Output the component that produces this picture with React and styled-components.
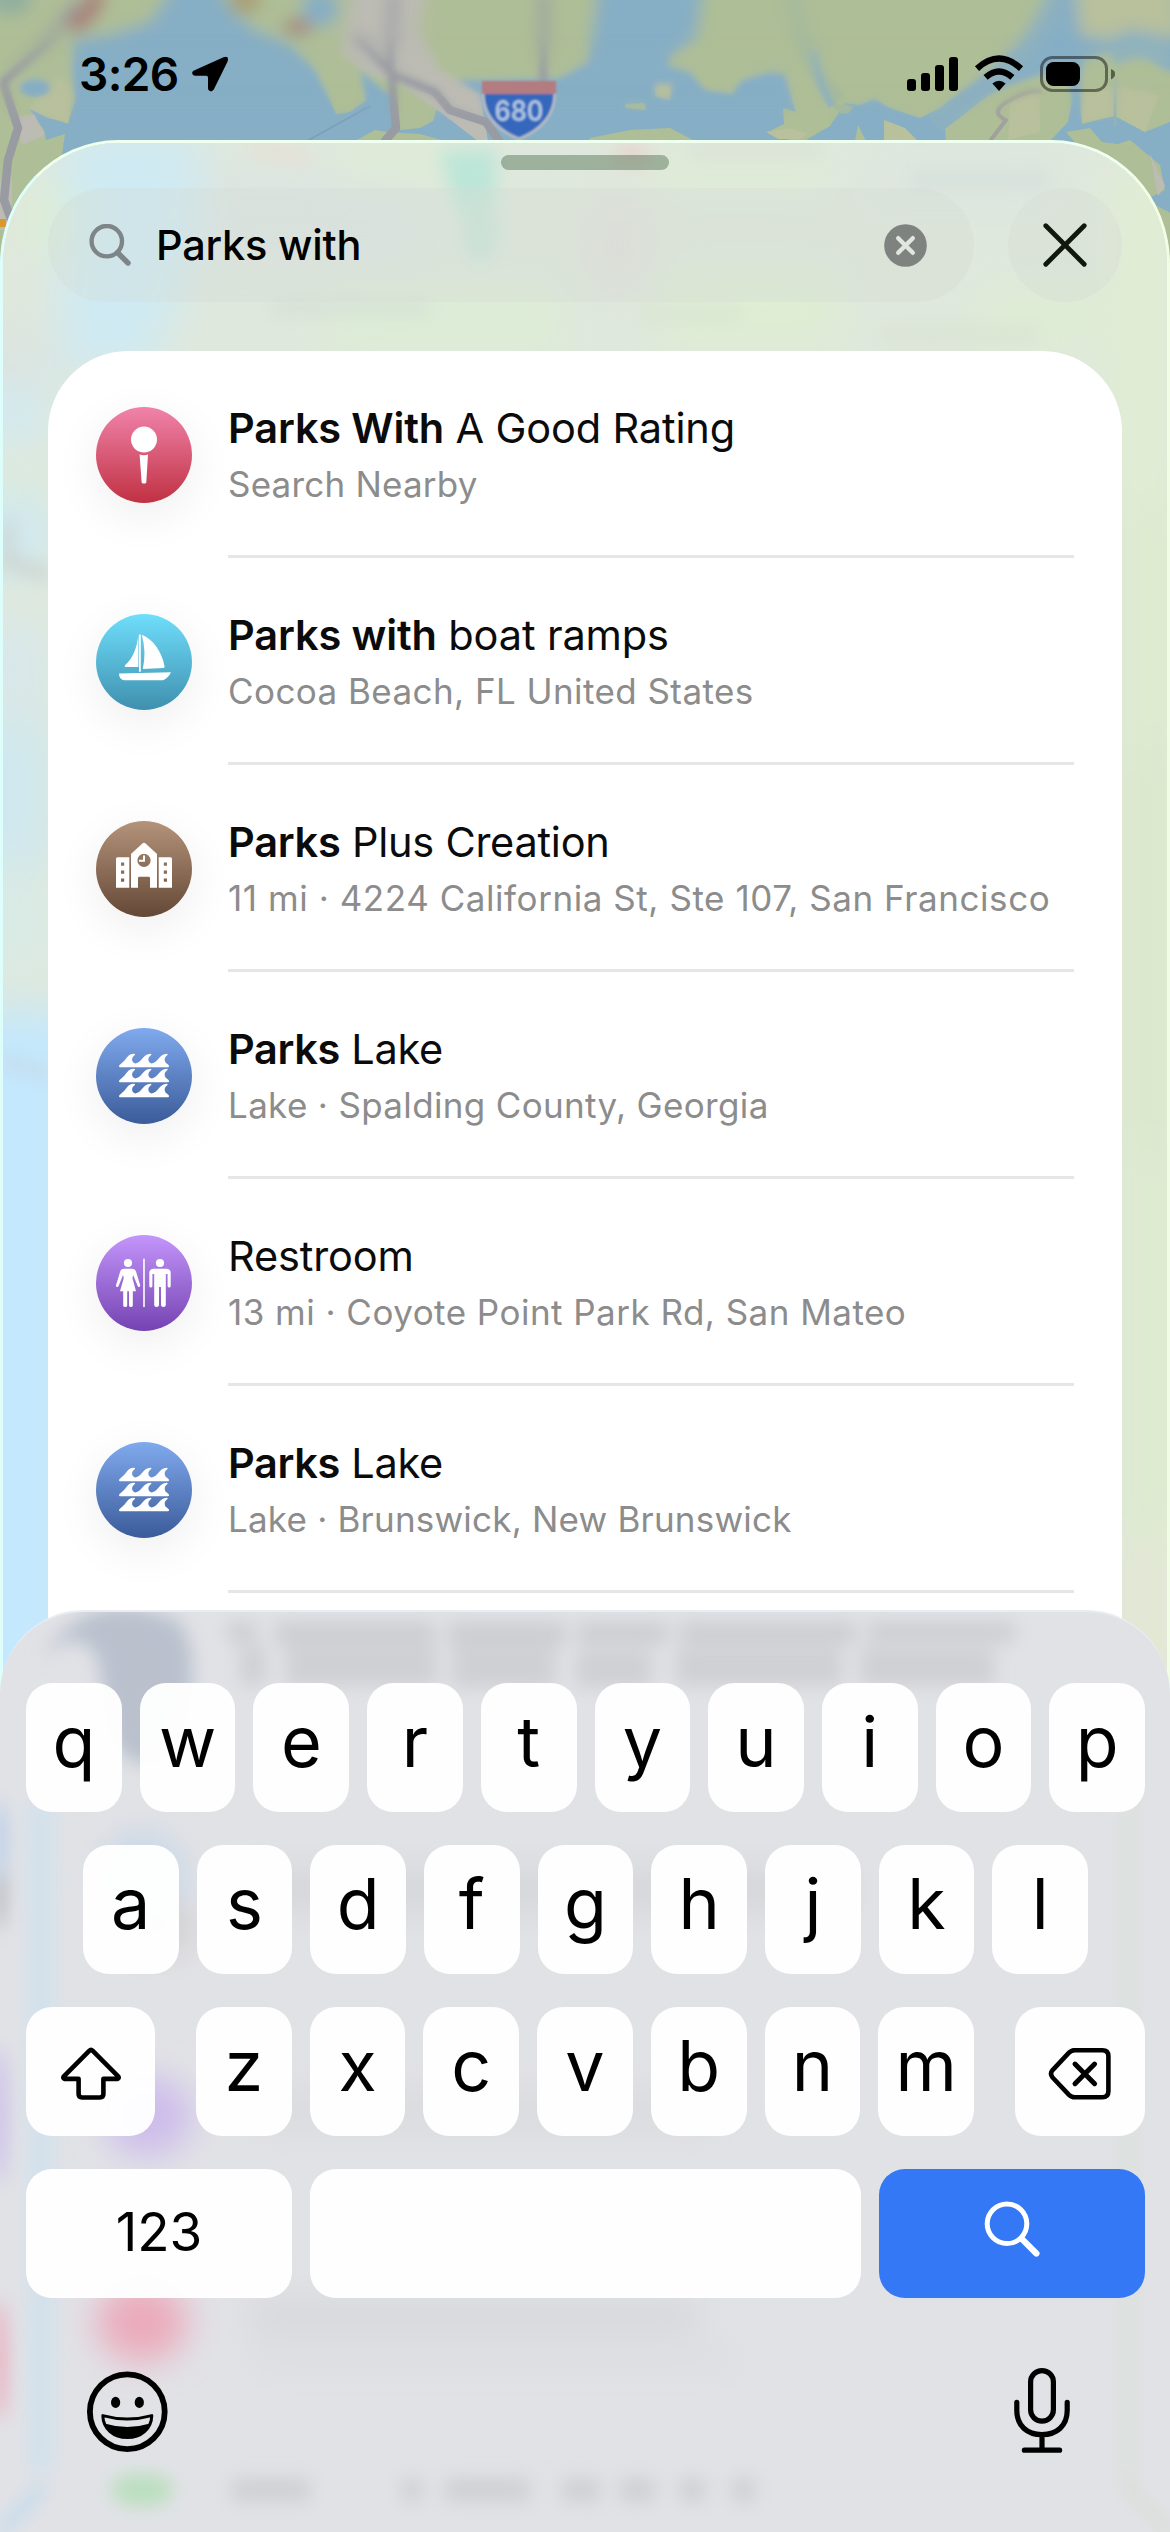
import React from 'react';
import styled, { createGlobalStyle } from 'styled-components';

const GlobalStyle = createGlobalStyle`
  * {
    box-sizing: border-box;
  }

  body {
    margin: 0;
    background: #fff;
    font-family: Inter, 'Liberation Sans', sans-serif;
  }
`;

// Layout
const Screen = styled.main`
  position: relative;
  display: flex;
  flex-direction: column;
  width: 1170px;
  height: 2532px;
  overflow: hidden;
  background: #86aec5;
`;

const Backdrop = styled.svg`
  position: absolute;
  top: 0;
  left: 0;
  width: 100%;
  height: 100%;
`;

const Icon = styled.svg`
  display: block;
  flex: none;
  width: ${({ $w }) => $w}px;
  height: ${({ $h }) => $h}px;
  fill: none;
  stroke-linecap: round;
  stroke-linejoin: round;
`;

// Status bar
const StatusBar = styled.header`
  position: relative;
  display: flex;
  justify-content: space-between;
  height: 140px;
  padding: 52px 54px 0 79px;
`;

const StatusGroup = styled.div`
  display: flex;
  height: 44px;
  align-items: center;
`;

const Time = styled.span`
  width: 112px;
  font-size: 46px;
  font-weight: 600;
  line-height: 44px;
  letter-spacing: -0.6px;
`;

// Sheet
const Sheet = styled.section`
  position: relative;
  display: flex;
  flex: 1;
  flex-direction: column;
  padding: 12px 45px 0;
  overflow: hidden;
  background: #dfe9dc;
  border: 3px solid #effff0;
  border-left-color: #defefb;
  border-right-color: #f2fde6;
  border-bottom: 0;
  border-radius: 118px 118px 0 0 / 124px 124px 0 0;
`;

const Grabber = styled.div`
  position: relative;
  flex: none;
  align-self: center;
  width: 168px;
  height: 15px;
  background: rgba(70, 100, 70, 0.42);
  border-radius: 8px;
`;

const SearchRow = styled.div`
  position: relative;
  display: flex;
  flex: none;
  gap: 34px;
  margin-top: 18px;
`;

const SearchField = styled.div`
  display: flex;
  flex: 1;
  align-items: center;
  height: 114px;
  padding: 0 47px 0 41px;
  background: rgba(212, 218, 210, 0.32);
  border-radius: 57px;
`;

const Query = styled.span`
  flex: 1;
  margin-left: 25px;
  font-size: 41.5px;
  font-weight: 500;
  letter-spacing: -0.2px;
`;

const CloseButton = styled.div`
  display: flex;
  align-items: center;
  justify-content: center;
  width: 114px;
  height: 114px;
  background: rgba(212, 218, 210, 0.32);
  border-radius: 50%;
`;

const Card = styled.div`
  position: relative;
  flex: 1;
  margin-top: 49px;
  overflow: hidden;
  background: #fff;
  border-radius: 80px 80px 0 0;
`;

// Result row
const Row = styled.div`
  display: flex;
  height: 207px;
  padding: 0 48px;
`;

const Badge = styled.div`
  flex: none;
  width: 96px;
  height: 96px;
  margin: 56px 36px 0 0;
  background: linear-gradient(${({ $from, $to }) => `${$from}, ${$to}`});
  border-radius: 50%;
  box-shadow: 0 12px 48px rgba(0, 0, 0, 0.07);
`;

const RowBody = styled.div`
  flex: 1;
  padding-top: 52px;
  border-bottom: 3px solid #e6e6e6;
  white-space: nowrap;
`;

const Title = styled.div`
  font-size: 41.5px;
  line-height: 50px;
  letter-spacing: ${({ $track }) => $track || 0}px;
  color: #0b0b0b;

  b {
    font-weight: 600;
  }
`;

const Subtitle = styled.div`
  margin-top: 9px;
  font-size: 35px;
  line-height: 44px;
  letter-spacing: ${({ $track }) => $track || 0}px;
  color: #8c8c8c;
`;

// Keyboard
const Keyboard = styled.section`
  position: absolute;
  bottom: 0;
  left: 0;
  display: flex;
  flex-direction: column;
  gap: 33px;
  width: 100%;
  height: 922px;
  padding: 71px 25px 0 26px;
  overflow: hidden;
  background: #e1e2e6;
  border-top: 2px solid #e9ecf2;
  border-radius: 84px 84px 0 0;
`;

const KeyRow = styled.div`
  position: relative;
  display: flex;
  flex: none;
  justify-content: ${({ $justify }) => $justify || 'center'};
  gap: 18px;
`;

const KeyGroup = styled.div`
  display: flex;
  gap: 18px;
`;

const Key = styled.div`
  display: flex;
  align-items: center;
  justify-content: center;
  width: ${({ $width }) => $width || 95.7}px;
  height: 129px;
  padding-bottom: ${({ $lift }) => $lift || 0}px;
  background: ${({ $primary }) => ($primary ? '#3578f6' : 'rgba(255, 255, 255, 0.96)')};
  border-radius: 26px;
  font-size: ${({ $small }) => ($small ? 53 : 70)}px;
  line-height: 1;
  color: #000;
`;

const BottomBar = styled.div`
  position: relative;
  display: flex;
  justify-content: space-between;
  padding: 35px 73px 0 59px;
`;

function MapShapes() {
  return (
    <g>
      <rect width="1170" height="900" fill="#86aec5" />
      <g fill="#aebe96">
        <path d="M-20 -20H180L150 22L110 35L74 40L72 70L75 100L68 124L50 118L38 105L30 110L44 130L46 140L65 134L62 155L40 190L0 300H-20Z" />
        <path d="M215 -20L230 10L255 30L290 45L315 70L330 100L336 114L350 112L366 100L360 70L395 100L400 130L420 128L433 121L438 105L420 80H480L560 78L588 62L600 -20Z" />
        <path d="M388 132L420 134L445 141H355L375 130Z" />
        <path d="M704 -20L696 38L670 56L668 66L690 72L705 90L732 94L742 80L770 72L785 74L792 100L796 112L783 108L784 124L768 132L790 140L806 140L830 126L845 103L860 105L874 99L890 108L920 118L960 98L1000 60L1045 20L1062 -20Z" />
        <path d="M944 122L975 102L1010 85L1040 75H1068L1072 100L1068 122L1050 141H946Z" />
        <path d="M1084 60L1110 50L1150 60L1180 78V118L1165 124L1145 132L1115 116L1082 124L1078 90Z" />
        <path d="M590 138L630 130L670 128L695 141H588Z" />
        <path d="M1066 132L1090 128L1102 142L1118 144L1130 140L1160 165L1165 190L1145 200L1175 215V420H1130L1090 160Z" />
        <path d="M625 104L645 103L646 110L625 108Z" />
        <path d="M858 125L866 141H855Z" />
        <path d="M1075 -20L1180 -20V40L1130 30L1110 40L1080 35Z" />
      </g>
      <g fill="#b8c09c">
        <path d="M28 108L60 75L72 90L68 122L48 118Z" />
        <path d="M1075 -20H1180V40L1130 30L1110 40L1080 35Z" />
        <path d="M1084 90L1120 85L1160 95L1145 132L1115 116L1082 122Z" />
        <path d="M655 84L672 84L670 100L655 96Z" />
        <path d="M884 120L905 128L918 141H884Z" />
        <path d="M766 132L790 128L808 134L800 139H778Z" />
        <path d="M1010 100L1040 92V132L1008 140Z" />
      </g>
      <g fill="#bcbbb4">
        <path d="M355 -20H430L418 30L440 70L480 94L488 141H478L440 112L400 84L365 72L340 52Z" />
        <path d="M15 118L34 114L45 135L22 145Z" />
        <path d="M0 180L12 175V230H0Z" />
        <path d="M1150 154L1165 186L1158 196Z" />
      </g>
      <ellipse cx="35" cy="88" rx="15" ry="9" fill="#86aec5" />
      <path d="M307 141L370 106" stroke="#7b9fb8" strokeWidth="1.5" />
      <path d="M790 -20Q800 50 822 80T845 105" stroke="#a5b99c" strokeWidth="16" fill="none" />
      <path d="M814 50Q818 85 832 106" stroke="#8eb1bd" strokeWidth="7" fill="none" />
      <path d="M1062 -20Q1045 40 1000 74L935 124" stroke="#8cb0c0" strokeWidth="20" fill="none" />
      <path d="M1076 80V130" stroke="#86aec5" strokeWidth="9" />
      <path d="M1115 80V126" stroke="#93b2b5" strokeWidth="3" />
      <path d="M1112 58Q1140 40 1170 56" stroke="#90b3bd" strokeWidth="18" fill="none" />
      <g fill="none" stroke="#999ba3" strokeWidth="8.5" strokeLinejoin="round">
        <path d="M78 0L48 42L3 82L18 128L8 160L4 200L12 222" />
        <path d="M394 -10L390 60L396 128L384 142" />
        <path d="M355 35L392 74L435 92L450 110L486 122L500 142" />
        <path d="M544 -10L543 84" />
        <path d="M1042 92Q1032 88 1010 100T1006 120L990 141" strokeWidth="4" stroke="#a0a09e" />
      </g>
      <path d="M98 -10Q92 18 70 26" stroke="#a8807a" strokeWidth="18" fill="none" />
      <ellipse cx="245" cy="0" rx="16" ry="14" fill="#a8a078" />
      <ellipse cx="298" cy="27" rx="15" ry="9" fill="#a58d83" />
      <ellipse cx="320" cy="8" rx="18" ry="18" fill="#86aec5" />
      <ellipse cx="10" cy="0" rx="22" ry="14" fill="#8fae9f" />
      <rect x="0" y="219" width="6" height="8" fill="#d9982a" />
    </g>
  );
}

function MapBackdrop() {
  return (
    <Backdrop viewBox="0 0 1170 2532">
      <defs>
        <filter id="mapBlur" x="-5%" y="-5%" width="110%" height="110%">
          <feGaussianBlur stdDeviation="8" />
        </filter>
        <filter id="mapMid" x="-5%" y="-5%" width="110%" height="110%">
          <feGaussianBlur stdDeviation="3" />
        </filter>
        <filter id="signBlur">
          <feGaussianBlur stdDeviation="1.3" />
        </filter>
        <linearGradient id="midFade" x1="0" y1="35" x2="0" y2="80" gradientUnits="userSpaceOnUse">
          <stop offset="0" stopColor="#000" />
          <stop offset="1" stopColor="#fff" />
        </linearGradient>
        <linearGradient id="mapFade" x1="0" y1="85" x2="0" y2="125" gradientUnits="userSpaceOnUse">
          <stop offset="0" stopColor="#000" />
          <stop offset="1" stopColor="#fff" />
        </linearGradient>
        <mask id="mapSoft" maskUnits="userSpaceOnUse" x="0" y="0" width="1170" height="900">
          <rect width="1170" height="900" fill="url(#midFade)" />
        </mask>
        <mask id="mapSharp" maskUnits="userSpaceOnUse" x="0" y="0" width="1170" height="900">
          <rect width="1170" height="900" fill="url(#mapFade)" />
        </mask>
      </defs>
      <g filter="url(#mapBlur)">
        <MapShapes />
      </g>
      <g mask="url(#mapSoft)">
        <g filter="url(#mapMid)">
          <MapShapes />
        </g>
      </g>
      <g mask="url(#mapSharp)">
        <MapShapes />
      </g>
      <g filter="url(#signBlur)">
        <path d="M484 84H554Q560 122 519 139Q478 122 484 84Z" fill="#3667bd" stroke="#b9bfc4" strokeWidth="2.5" />
        <path d="M482 81H556V94H482Z" fill="#b27c80" />
        <text x="519" y="121" textAnchor="middle" fontSize="28" fontWeight="600" textLength="49" lengthAdjust="spacingAndGlyphs" fill="#aec4e0">680</text>
      </g>
    </Backdrop>
  );
}

// Colour that shows through the frosted sheet, offset by the sheet's own origin
function SheetTint() {
  return (
    <Backdrop viewBox="3 143 1164 2389" preserveAspectRatio="none">
      <defs>
        <filter id="tintBlur" x="-20%" y="-20%" width="140%" height="140%">
          <feGaussianBlur stdDeviation="22" />
        </filter>
        <filter id="tintSoft" x="-50%" y="-50%" width="200%" height="200%">
          <feGaussianBlur stdDeviation="9" />
        </filter>
      </defs>
      <rect x="0" y="140" width="1170" height="2392" fill="#dfe8dc" />
      <g filter="url(#tintBlur)">
        <path d="M60 130H200V250L150 370H60Z" fill="#cfeaf3" />
        <rect x="30" y="190" width="40" height="60" fill="#dcefd2" />
        <rect x="200" y="170" width="220" height="100" fill="#dce5e1" />
        <rect x="340" y="140" width="120" height="40" fill="#dfedd5" />
        <rect x="650" y="160" width="180" height="30" fill="#dfedd6" />
        <rect x="330" y="290" width="230" height="60" fill="#dcedd4" />
        <rect x="590" y="200" width="60" height="90" fill="#dfe0db" />
        <rect x="660" y="270" width="180" height="80" fill="#deedd3" />
        <rect x="860" y="150" width="200" height="60" fill="#dee6df" />
        <rect x="980" y="290" width="120" height="60" fill="#deedd3" />
        <rect x="1110" y="170" width="60" height="330" fill="#e1edd3" />
        <rect x="1120" y="500" width="60" height="250" fill="#deebcd" />
        <rect x="1120" y="750" width="60" height="400" fill="#dce8cb" />
        <rect x="1120" y="1150" width="60" height="380" fill="#ddebce" />
        <rect x="1120" y="1530" width="60" height="300" fill="#e2e8d3" />
        <rect x="-60" y="330" width="110" height="60" fill="#dbe4e0" />
        <rect x="-60" y="390" width="110" height="50" fill="#d2eaf1" />
        <rect x="-60" y="460" width="110" height="40" fill="#dceade" />
        <rect x="-60" y="500" width="110" height="70" fill="#cfe9f2" />
        <rect x="-60" y="620" width="110" height="90" fill="#d8e8ea" />
        <rect x="-60" y="720" width="110" height="150" fill="#cfe8ef" />
        <rect x="-60" y="880" width="110" height="90" fill="#d9ebe6" />
        <rect x="-60" y="1010" width="140" height="1540" fill="#c4e8fd" />
      </g>
      <g filter="url(#tintSoft)">
        <path d="M440 150H496V205L470 240L450 190Z" fill="#bce6d8" />
        <ellipse cx="480" cy="230" rx="20" ry="35" fill="#c9e5d8" />
        <ellipse cx="632" cy="155" rx="18" ry="8" fill="#e7cfc9" />
        <path d="M250 148L310 158" stroke="#ecd9d0" strokeWidth="8" />
        <path d="M690 150H820" stroke="#d5dcd0" strokeWidth="8" />
        <path d="M270 308H430" stroke="#d5e1d7" strokeWidth="14" />
        <path d="M910 180H1050" stroke="#d6e1db" strokeWidth="18" />
        <path d="M880 334H1040" stroke="#d8e2d0" strokeWidth="12" />
        <path d="M640 315H740" stroke="#d9e5d3" strokeWidth="14" />
        <path d="M0 560L50 575" stroke="#c9d2ce" strokeWidth="12" />
        <path d="M0 1060L50 1075" stroke="#c3d8e6" strokeWidth="10" />
        <path d="M8 520V560" stroke="#cbd1ca" strokeWidth="10" />
      </g>
    </Backdrop>
  );
}

// Blurred rows below the keyboard glass, offset by the keyboard's own origin
function KeyboardTint() {
  return (
    <Backdrop viewBox="0 1612 1170 920" preserveAspectRatio="none">
      <defs>
        <filter id="glass" x="-60%" y="-60%" width="220%" height="220%">
          <feGaussianBlur stdDeviation="17" />
        </filter>
        <filter id="glassSoft" x="-60%" y="-60%" width="220%" height="220%">
          <feGaussianBlur stdDeviation="9" />
        </filter>
      </defs>
      <g filter="url(#glassSoft)">
        <path d="M40 1660Q90 1580 180 1622Q205 1660 180 1740Q150 1790 110 1740L98 1660Q80 1622 40 1660Z" fill="#bac1cd" />
        <g fill="#cccdd1">
          <rect x="228" y="1622" width="28" height="20" />
          <rect x="275" y="1622" width="160" height="22" />
          <rect x="448" y="1622" width="118" height="24" />
          <rect x="578" y="1622" width="90" height="22" />
          <rect x="680" y="1622" width="176" height="22" />
          <rect x="868" y="1622" width="147" height="20" />
        </g>
        <g fill="#cfd0d4">
          <rect x="240" y="1646" width="26" height="40" />
          <rect x="286" y="1646" width="151" height="40" />
          <rect x="452" y="1648" width="104" height="40" />
          <rect x="576" y="1650" width="76" height="38" />
          <rect x="676" y="1648" width="166" height="38" />
          <rect x="860" y="1648" width="134" height="38" />
        </g>
        <rect x="28" y="1800" width="26" height="670" fill="#d2e1ec" />
        <rect x="1120" y="1700" width="18" height="790" fill="#dbe0dd" />
        <path d="M0 2532L44 2486" stroke="#b7d8ee" strokeWidth="9" />
        <path d="M1170 2532L1124 2484" stroke="#d5dccd" strokeWidth="8" />
        <ellipse cx="0" cy="2115" rx="7" ry="70" fill="#c9bcea" />
        <ellipse cx="0" cy="2360" rx="7" ry="60" fill="#ebaabb" />
        <ellipse cx="0" cy="1890" rx="4" ry="40" fill="#9aa0a6" />
        <ellipse cx="0" cy="1840" rx="5" ry="40" fill="#a9c6ea" />
      </g>
      <g filter="url(#glass)">
        <ellipse cx="142" cy="1880" rx="42" ry="46" fill="#c5d6e7" />
        <ellipse cx="160" cy="1930" rx="36" ry="24" fill="#d2cecc" />
        <ellipse cx="148" cy="2116" rx="44" ry="40" fill="#cdbceb" />
        <ellipse cx="142" cy="2322" rx="46" ry="40" fill="#ebabbc" />
        <path d="M250 1890H850" stroke="#d5d6da" strokeWidth="40" />
        <path d="M250 2110H720" stroke="#dbdcdf" strokeWidth="44" />
        <path d="M250 2316H700" stroke="#d7d8dc" strokeWidth="34" />
        <path d="M250 2360H740" stroke="#dddee1" strokeWidth="26" />
      </g>
      <g filter="url(#glassSoft)">
        <ellipse cx="142" cy="2490" rx="32" ry="17" fill="#bbdfbf" />
        <path d="M232 2490H310M402 2490H422M445 2490H530M562 2490H600M620 2490H655M680 2490H705M732 2490H755" stroke="#cfd0d4" strokeWidth="24" />
      </g>
    </Backdrop>
  );
}

// Glyphs of the result badges, drawn on a 96 unit disc
const WAVE = 'M25 35.8C31 31.5 31 26 38 25.8C39.6 25.9 39.4 27 38 27.8C35 30 35.6 34.8 39.4 35.4C45.5 35 47 26 54.3 25.8C55.9 25.9 55.7 27 54.3 27.8C51.3 30 51.9 34.8 55.7 35.4C61.8 35 63.3 26 70.6 25.8C72.2 25.9 72 27 70.6 27.8C67.6 30 68.2 34.8 72 36.4Q73 37 73 38.2Q73 39.3 72 39.3H24Q23 39.3 23 38.2Q23 37.2 25 35.8Z';

const glyphs = {
  pin: (
    <>
      <circle cx="48" cy="32.6" r="13" />
      <path d="M43.6 47.6Q48 48.8 52 47.6L50.3 75.2Q50.2 76.6 48.8 76.6H47.2Q45.8 76.6 45.6 75.2Z" />
    </>
  ),
  boat: (
    <>
      <path d="M43 20.5H44.8V57.8H43Z" />
      <path d="M42.4 21C41 33 37 45 29 51.2Q28 53 29.5 53H42.4Z" />
      <path d="M45.8 20.8C57 25 66 38 68.6 52.4Q68.8 53.8 67.6 53.9L46.8 55Q50.6 38 45.8 20.8Z" />
      <path d="M23 59.4L75 58.2Q72 64.4 67 66.2H28Q23 65 23 59.4Z" />
    </>
  ),
  school: (
    <path fillRule="evenodd" d="M21.5 36.3H33.3V66.7H20V37.8Q20 36.3 21.5 36.3ZM25 41.6V44.8H28.2V41.6ZM25 49.6V52.8H28.2V49.6ZM25 57.6V60.8H28.2V57.6ZM62.7 36.3H74.5Q76 36.3 76 37.8V66.7H62.7ZM67.8 41.6V44.8H71V41.6ZM67.8 49.6V52.8H71V49.6ZM67.8 57.6V60.8H71V57.6ZM35 33.6Q35 32.8 36 32L46.4 22.4Q48 21.2 49.6 22.4L60 32Q61 32.8 61 33.6V66.7H54V57.2Q54 55.8 52.6 55.8H43.4Q42 55.8 42 57.2V66.7H35ZM48 32.8A6.6 6.6 0 1 0 48 46A6.6 6.6 0 1 0 48 32.8ZM47 34.6H49V40.8H43V38.8H47Z" />
  ),
  waves: (
    <>
      <path d={WAVE} />
      <path d={WAVE} transform="translate(0 15)" />
      <path d={WAVE} transform="translate(0 30)" />
    </>
  ),
  restroom: (
    <>
      <circle cx="32" cy="28" r="4.1" />
      <path d="M28 33.7H36Q39 33.7 40 36.5L44.3 50.4Q44.4 52 43 52Q42 52 41.5 50.8L37.2 40L36.4 43L40 56.2H36.8V70.4Q36.6 72 35 72Q33.2 72 33 70.4V56.2H31.2V70.4Q31 72 29.2 72Q27.4 72 27.2 70.4V56.2H24L27.8 43L27 40L22.6 51Q22 52.4 21 52Q19.6 51.8 20 50.2L24.2 36.5Q25 33.7 28 33.7Z" />
      <path d="M47.2 23.8H48.8V72H47.2Z" />
      <circle cx="64" cy="28" r="4.1" />
      <path d="M57.4 33.7H70.6Q74.7 33.9 74.7 38V51.2Q74.6 52.6 73.2 52.6Q71.8 52.6 71.6 51.2V39H69.8V70.2Q69.6 72 67.4 72Q65.2 72 65 70.2V52H63V70.2Q62.8 72 60.6 72Q58.4 72 58.2 70.2V39H56.4V51.2Q56.2 52.6 54.8 52.6Q53.4 52.6 53.3 51.2V38Q53.3 33.9 57.4 33.7Z" />
    </>
  ),
};

const results = [
  { glyph: 'pin', from: '#f083aa', to: '#c03142', match: 'Parks With', rest: ' A Good Rating', track: -0.16, sub: 'Search Nearby', subTrack: 0.2 },
  { glyph: 'boat', from: '#6fdefc', to: '#3f90ae', match: 'Parks with', rest: ' boat ramps', track: -0.13, sub: 'Cocoa Beach, FL United States', subTrack: 0.43 },
  { glyph: 'school', from: '#b4937a', to: '#644836', match: 'Parks', rest: ' Plus Creation', track: -0.25, sub: '11 mi · 4224 California St, Ste 107, San Francisco', subTrack: 0.56 },
  { glyph: 'waves', from: '#80aaee', to: '#3b5b99', match: 'Parks', rest: ' Lake', track: -0.35, sub: 'Lake · Spalding County, Georgia', subTrack: 0.34 },
  { glyph: 'restroom', from: '#c495fb', to: '#7443b1', match: '', rest: 'Restroom', track: -0.15, sub: '13 mi · Coyote Point Park Rd, San Mateo', subTrack: 0.47 },
  { glyph: 'waves', from: '#80aaee', to: '#3b5b99', match: 'Parks', rest: ' Lake', track: -0.35, sub: 'Lake · Brunswick, New Brunswick', subTrack: 0.21 },
];

function Result({ glyph, from, to, match, rest, track, sub, subTrack }) {
  return (
    <Row>
      <Badge $from={from} $to={to}>
        <Icon $w={96} $h={96} viewBox="0 0 96 96">
          <g fill="#fff">{glyphs[glyph]}</g>
        </Icon>
      </Badge>
      <RowBody>
        <Title $track={track}>
          {match && <b>{match}</b>}
          {rest}
        </Title>
        <Subtitle $track={subTrack}>{sub}</Subtitle>
      </RowBody>
    </Row>
  );
}

function Letters({ keys }) {
  return keys.split('').map(letter => <Key key={letter} $lift={12}>{letter}</Key>);
}

function App() {
  return (
    <Screen>
      <GlobalStyle />
      <MapBackdrop />

      <StatusBar>
        <StatusGroup>
          <Time>3:26</Time>
          <Icon $w={38} $h={38} viewBox="191 56 38 38">
            <path d="M194 71.5L223.5 58.2Q229.5 56.6 227.6 62.4L213.8 90.6Q211.6 93.6 209 91.6Q208 90.6 208 89V78.6Q208 76.8 206.2 76.8H195.4Q192 76.4 192.2 73.4Q192.6 72 194 71.5Z" fill="#000" />
          </Icon>
        </StatusGroup>
        <StatusGroup>
          <Icon $w={211} $h={40} viewBox="905 54 211 40">
            <g fill="#000">
              <rect x="907" y="79" width="9" height="12" rx="3" />
              <rect x="921" y="73" width="9" height="18" rx="3" />
              <rect x="935" y="65" width="9" height="26" rx="3" />
              <rect x="949" y="57" width="9" height="34" rx="3" />
              <path d="M999 91L992.4 83.6Q999 77.8 1005.6 83.6Z" />
              <rect x="1046" y="62" width="34" height="24" rx="7.5" />
            </g>
            <g stroke="#000" strokeWidth="6.2" strokeLinecap="butt">
              <path d="M985.6 77.4Q999 65.4 1012.4 77.4" />
              <path d="M977 68.6Q999 48.6 1021 68.6" />
            </g>
            <rect x="1041.5" y="57.5" width="65" height="33" rx="11" stroke="#000" strokeOpacity="0.45" strokeWidth="3" />
            <path d="M1111 69Q1115.4 70.6 1115 74Q1115.4 77.4 1111 79.4Z" fill="#000" fillOpacity="0.5" />
          </Icon>
        </StatusGroup>
      </StatusBar>

      <Sheet>
        <SheetTint />
        <Grabber />
        <SearchRow>
          <SearchField>
            <Icon $w={42} $h={42} viewBox="88 224 42 42" stroke="#7d8588" strokeWidth="4.4">
              <circle cx="105.8" cy="241.2" r="15.2" />
              <path d="M116.5 252.5L127 263" strokeWidth="5.4" />
            </Icon>
            <Query>Parks with</Query>
            <Icon $w={43} $h={43} viewBox="0 0 43 43">
              <circle cx="21.5" cy="21.5" r="21.3" fill="#7f8380" />
              <path d="M14.2 14.2L28.8 28.8M28.8 14.2L14.2 28.8" stroke="#e1e7df" strokeWidth="4.4" />
            </Icon>
          </SearchField>
          <CloseButton>
            <Icon $w={46} $h={46} viewBox="0 0 46 46" stroke="#10180c" strokeWidth="4.8">
              <path d="M3.8 3.8L42.2 42.2M42.2 3.8L3.8 42.2" />
            </Icon>
          </CloseButton>
        </SearchRow>
        <Card>
          {results.map((result, index) => <Result key={index} {...result} />)}
        </Card>
      </Sheet>

      <Keyboard>
        <KeyboardTint />
        <KeyRow>
          <Letters keys="qwertyuiop" />
        </KeyRow>
        <KeyRow>
          <Letters keys="asdfghjkl" />
        </KeyRow>
        <KeyRow $justify="space-between">
          <Key $width={129}>
            <Icon $w={64} $h={56} viewBox="58 2043.5 64 56" stroke="#000" strokeWidth="4.6">
              <path d="M88.2 2050.4Q90 2048.6 91.8 2050.4L117.4 2076.2Q118.4 2078 116.4 2078.4H102.4V2093.6Q102.4 2097 99 2097H81Q77.6 2097 77.6 2093.6V2078.4H63.6Q61.6 2078 62.6 2076.2Z" />
            </Icon>
          </Key>
          <KeyGroup>
            <Letters keys="zxcvbnm" />
          </KeyGroup>
          <Key $width={130}>
            <Icon $w={66} $h={56} viewBox="1047 2043.5 66 56" stroke="#000" strokeWidth="4.6">
              <path d="M1073 2049.8H1102.4Q1108.4 2049.8 1108.4 2055.8V2090.8Q1108.4 2096.8 1102.4 2096.8H1075Q1071.4 2096.8 1069 2094.4L1052.6 2077Q1049.4 2073.3 1052.6 2069.6L1069 2052.2Q1071.4 2049.8 1075 2049.8Z" />
              <path d="M1075 2063.6L1094.6 2083.2M1094.6 2063.6L1075 2083.2" strokeWidth="5" />
            </Icon>
          </Key>
        </KeyRow>
        <KeyRow $justify="space-between">
          <Key $width={266} $small $lift={3}>123</Key>
          <Key $width={551} />
          <Key $width={266.5} $primary $lift={10}>
            <Icon $w={56} $h={56} viewBox="983 2200.5 56 56" stroke="#fff" strokeWidth="5">
              <circle cx="1006" cy="2223.3" r="19.8" />
              <path d="M1020.8 2238.4L1035.4 2253" strokeWidth="6.2" />
            </Icon>
          </Key>
        </KeyRow>
        <BottomBar>
          <Icon $w={84} $h={90} viewBox="85 2366 84 90">
            <circle cx="127.3" cy="2411.7" r="37.4" stroke="#000" strokeWidth="5.8" />
            <ellipse cx="115.6" cy="2402.4" rx="4.6" ry="5.6" fill="#000" />
            <ellipse cx="139.3" cy="2402.4" rx="4.6" ry="5.6" fill="#000" />
            <path d="M102.8 2415.6Q127.3 2422.4 151.8 2415.6C151.4 2429 141 2437.6 127.3 2437.6S103.2 2429 102.8 2415.6Z" stroke="#000" strokeWidth="3" />
            <path d="M104.6 2423.4Q127.3 2430.4 150 2423.4Q144 2437.6 127.3 2437.6T104.6 2423.4Z" fill="#000" />
          </Icon>
          <Icon $w={60} $h={90} viewBox="1012 2364 60 90" stroke="#000" strokeWidth="5.2">
            <rect x="1030.6" y="2368.6" width="22.8" height="50.6" rx="11.4" />
            <path d="M1016.8 2400.4V2408.6C1016.8 2423.6 1027 2432.6 1042 2432.6S1067.2 2423.6 1067.2 2408.6V2400.4M1042 2433V2447.6M1024.4 2448.2H1059.6" />
          </Icon>
        </BottomBar>
      </Keyboard>
    </Screen>
  );
}

export default App;
